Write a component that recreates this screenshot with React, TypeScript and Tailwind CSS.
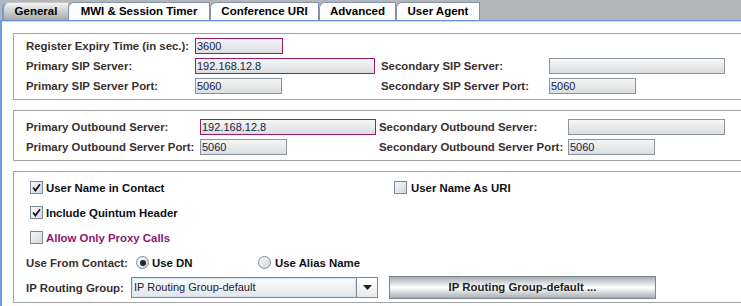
import React from "react";

const FONT = { fontFamily: '"Liberation Sans", Arial, Helvetica, sans-serif' };
const LBL = "text-[11.4px] font-bold text-[#3b2f2f] whitespace-nowrap leading-[14px]";
const CLBL = "text-[11.4px] font-bold text-[#0e0e16] whitespace-nowrap leading-[14px]";

function Field({ w, value, hot }: { w: string; value?: string; hot?: boolean }) {
  return (
    <div
      className={`${w} h-[16px] shrink-0 border ${
        hot ? "border-[#9b1b6b]" : "border-[#8a949e]"
      } bg-gradient-to-b from-[#f6f7f7] to-[#dadddf] text-[11px] leading-[14px] pl-[1px] text-[#201c40] whitespace-nowrap overflow-hidden`}
    >
      {value}
    </div>
  );
}

function Check({ checked }: { checked?: boolean }) {
  return (
    <div className="w-[13px] h-[13px] shrink-0 border border-[#7d8a98] bg-gradient-to-br from-[#f6f8fa] to-[#d2d9e1] flex items-center justify-center">
      {checked && (
        <svg width="9" height="9" viewBox="0 0 9 9">
          <path d="M1.2 4.6 L3.4 7.6 L8 1.2" stroke="#141414" strokeWidth="1.7" fill="none" />
        </svg>
      )}
    </div>
  );
}

function Radio({ on }: { on?: boolean }) {
  return (
    <div className="w-[13px] h-[13px] shrink-0 rounded-full border border-[#7d8a98] bg-gradient-to-br from-[#fafbfc] to-[#cfd6de] flex items-center justify-center">
      {on && <div className="w-[6px] h-[6px] rounded-full bg-[#262626]" />}
    </div>
  );
}

function Tab({ label, w, selected }: { label: string; w: string; selected?: boolean }) {
  if (selected) {
    return (
      <div
        className={`${w} h-[18px] shrink-0 flex items-center justify-center rounded-tl-[7px] border-l-2 border-t border-l-[#6b9be0] border-t-[#c8c8c8] bg-gradient-to-b from-[#f4f4f4] to-[#a9a9a9] text-[11.5px] font-bold text-black`}
      >
        {label}
      </div>
    );
  }
  return (
    <div
      className={`${w} h-[18px] shrink-0 flex items-center justify-center rounded-tl-[6px] border-t border-l border-r border-[#8193a8] bg-[#fdfdfd] text-[11.5px] font-bold text-black`}
    >
      {label}
    </div>
  );
}

export default function App() {
  return (
    <div className="w-[741px] h-[306px] overflow-hidden bg-white" style={FONT}>
      {/* Tab bar */}
      <div className="h-[20px] bg-[#b5b6ba] flex items-end pl-[2px]">
        <Tab label="General" w="w-[66px]" selected />
        <Tab label="MWI & Session Timer" w="w-[142px]" />
        <Tab label="Conference URI" w="w-[109px]" />
        <Tab label="Advanced" w="w-[77px]" />
        <Tab label="User Agent" w="w-[84px]" />
      </div>

      {/* Content */}
      <div className="h-[286px] border-t border-l-2 border-t-[#5e92dc] border-l-[#6e9ee2] bg-white">
        <div className="h-[1px] bg-[#cfe0f5]" />

        {/* Panel 1 */}
        <div className="ml-[11px] mt-[11px] w-[740px] border border-[#a3a3a3] pt-[4px] pb-[5px] pl-[12px] flex flex-col gap-[4px]">
          <div className="h-[16px] flex items-center">
            <div className="w-[355px] flex items-center">
              <div className={`w-[169px] ${LBL}`}>Register Expiry Time (in sec.):</div>
              <Field w="w-[88px]" value="3600" hot />
            </div>
          </div>
          <div className="h-[16px] flex items-center">
            <div className="w-[355px] flex items-center">
              <div className={`w-[169px] ${LBL}`}>Primary SIP Server:</div>
              <Field w="w-[180px]" value="192.168.12.8" hot />
            </div>
            <div className={`w-[168px] ${LBL}`}>Secondary SIP Server:</div>
            <Field w="w-[176px]" />
          </div>
          <div className="h-[16px] flex items-center">
            <div className="w-[355px] flex items-center">
              <div className={`w-[169px] ${LBL}`}>Primary SIP Server Port:</div>
              <Field w="w-[87px]" value="5060" />
            </div>
            <div className={`w-[168px] ${LBL}`}>Secondary SIP Server Port:</div>
            <Field w="w-[87px]" value="5060" />
          </div>
        </div>

        {/* Panel 2 */}
        <div className="ml-[11px] mt-[10px] w-[740px] border border-[#a3a3a3] pt-[8px] pb-[5px] pl-[12px] flex flex-col gap-[4px]">
          <div className="h-[16px] flex items-center">
            <div className="w-[353px] flex items-center">
              <div className={`w-[174px] ${LBL}`}>Primary Outbound Server:</div>
              <Field w="w-[176px]" value="192.168.12.8" hot />
            </div>
            <div className={`w-[189px] ${LBL}`}>Secondary Outbound Server:</div>
            <Field w="w-[157px]" />
          </div>
          <div className="h-[16px] flex items-center">
            <div className="w-[353px] flex items-center">
              <div className={`w-[174px] ${LBL}`}>Primary Outbound Server Port:</div>
              <Field w="w-[87px]" value="5060" />
            </div>
            <div className={`w-[189px] ${LBL}`}>Secondary Outbound Server Port:</div>
            <Field w="w-[87px]" value="5060" />
          </div>
        </div>

        {/* Panel 3 */}
        <div className="ml-[11px] mt-[10px] w-[740px] border border-[#a3a3a3] pt-[3px] pb-[2px] pl-[12px] flex flex-col">
          <div className="h-[25px] flex items-center pl-[4px]">
            <div className="w-[364px] flex items-center gap-[3px]">
              <Check checked />
              <span className={CLBL}>User Name in Contact</span>
            </div>
            <div className="flex items-center gap-[4px]">
              <Check />
              <span className={CLBL}>User Name As URI</span>
            </div>
          </div>
          <div className="h-[25px] flex items-center pl-[4px] gap-[3px]">
            <Check checked />
            <span className={CLBL}>Include Quintum Header</span>
          </div>
          <div className="h-[25px] flex items-center pl-[4px] gap-[3px]">
            <Check />
            <span className="text-[11.4px] font-bold text-[#8c1870] whitespace-nowrap leading-[14px]">
              Allow Only Proxy Calls
            </span>
          </div>
          <div className="h-[25px] flex items-center">
            <div className={`w-[110px] ${LBL}`}>Use From Contact:</div>
            <div className="w-[122px] flex items-center gap-[3px]">
              <Radio on />
              <span className={CLBL}>Use DN</span>
            </div>
            <div className="flex items-center gap-[4px]">
              <Radio />
              <span className={CLBL}>Use Alias Name</span>
            </div>
          </div>
          <div className="h-[25px] flex items-center">
            <div className={`w-[105px] ${LBL}`}>IP Routing Group:</div>
            <div className="flex items-center">
              <div className="w-[226px] h-[21px] border border-[#7d8b99] shadow-[inset_0_0_0_1px_#d3e0ee] bg-gradient-to-b from-[#fbfbfc] to-[#e3e6e9] text-[11px] leading-[19px] pl-[2px] text-[#201c40] whitespace-nowrap">
                IP Routing Group-default
              </div>
              <div className="w-[21px] h-[21px] border border-l-0 border-[#7d8b99] bg-gradient-to-b from-[#ffffff] to-[#e6e9ec] flex items-center justify-center">
                <svg width="9" height="5" viewBox="0 0 9 5">
                  <polygon points="0,0 9,0 4.5,5" fill="#222" />
                </svg>
              </div>
            </div>
            <div className="ml-[11px] w-[267px] h-[23px] border border-[#7a8694] bg-[linear-gradient(to_bottom,#a9adb2,#ffffff_50%,#a9adb2)] flex items-center justify-center text-[11.4px] font-bold text-[#1e1e1e] whitespace-nowrap">
              IP Routing Group-default ...
            </div>
          </div>
        </div>
      </div>
    </div>
  );
}
